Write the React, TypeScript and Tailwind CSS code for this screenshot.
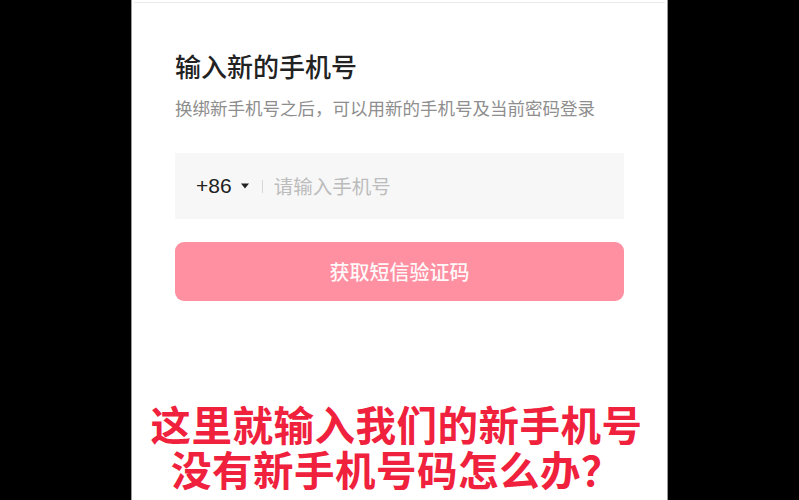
import React from 'react';

export default function App() {
  const cjk = { fontFamily: '"Noto Sans CJK SC", "Noto Sans", sans-serif' };

  return (
    <div className="flex h-[500px] w-full justify-center overflow-hidden bg-black" style={cjk}>
      <div className="flex h-full w-[537px] flex-col border-x border-[#9a9a9a] bg-white">
        {/* top divider */}
        <div className="mx-[2px] mt-[2px] h-px bg-[#ececec]" />

        <div className="flex flex-col px-[43px] pt-[47px]">
          <h1 className="text-[26px] font-medium leading-[32px] text-[#222]">输入新的手机号</h1>
          <p className="mt-[14px] text-[17.5px] leading-[24px] text-[#8e8e8e]">
            换绑新手机号之后，可以用新的手机号及当前密码登录
          </p>

          {/* phone input */}
          <div className="mt-[33px] flex h-[66px] items-center bg-[#f7f7f7] pl-[21px]">
            <span
              className="text-[21px] text-[#222]"
              style={{ fontFamily: '"Liberation Sans", Arial, sans-serif' }}
            >
              +86
            </span>
            <svg className="ml-[9px]" width="8" height="6" viewBox="0 0 8 6">
              <path d="M0 0.5h8L4 5.5z" fill="#222" />
            </svg>
            <div className="ml-[13px] h-[13px] w-px bg-[#d6d6d6]" />
            <span className="ml-[11px] text-[19.5px] text-[#bcbcbc]">请输入手机号</span>
          </div>

          {/* button */}
          <button className="mt-[23px] flex h-[59px] items-center justify-center rounded-[9px] bg-[#fe90a2] text-[20px] font-medium text-white/95">
            获取短信验证码
          </button>
        </div>

        {/* video caption */}
        <div className="mt-[100px] flex flex-col items-center text-[40.5px] font-bold leading-[45px] tracking-[0.5px] text-[#f0213d]">
          <div className="-ml-[6px]">这里就输入我们的新手机号</div>
          <div className="-ml-[6px]">没有新手机号码怎么办？</div>
        </div>
      </div>
    </div>
  );
}
